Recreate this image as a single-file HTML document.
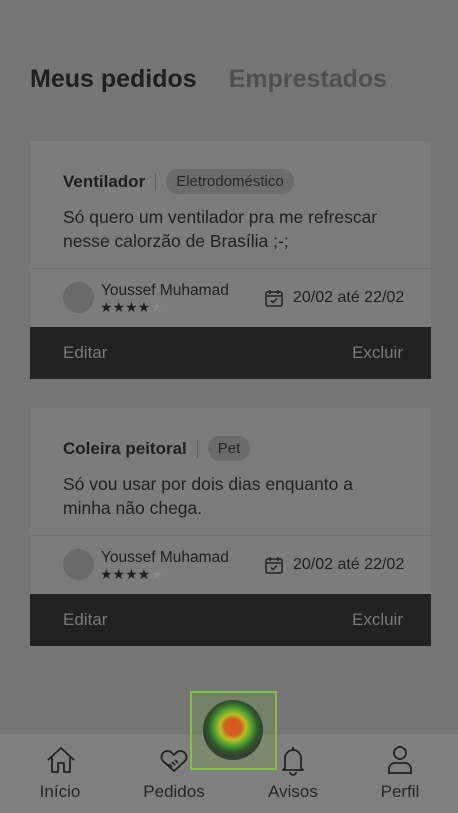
<!DOCTYPE html>
<html><head><meta charset="utf-8"><style>
*{margin:0;padding:0;box-sizing:border-box}
body{width:458px;height:813px;background:#757575;font-family:"Liberation Sans",sans-serif;position:relative;overflow:hidden;color:#1f1f1f}
.tabs{position:absolute;top:65px;left:30px;font-size:25px;font-weight:bold}
.tabs span{margin-right:32px}
.card{position:absolute;left:30px;width:401px;background:#7c7c7c}
.head{position:absolute;left:33px;top:28px;display:flex;align-items:center;font-size:17px;font-weight:bold}
.sep{width:1px;height:18px;background:#5e5e5e;margin:0 10px}
.chip{font-weight:normal;font-size:15px;background:#6b6b6b;padding:4px 10px;border-radius:12px;color:#262626}
.desc{position:absolute;left:33px;top:64px;font-size:17.5px;line-height:24px;width:330px}
.line{position:absolute;left:0;right:0;top:127px;height:1px;background:#717171}
.av{position:absolute;left:33px;top:141px;width:31px;height:31px;border-radius:50%;background:#6a6a6a}
.name{position:absolute;left:71px;top:141px;font-size:15.5px}
.stars{position:absolute;left:70px;top:158px;font-size:14px;letter-spacing:0px}
.date{position:absolute;left:234px;top:147px;font-size:16px;display:flex;align-items:center;gap:9px}
.bar{position:absolute;left:0;right:0;top:186px;height:52px;background:#212121;color:#7a7a7a;font-size:17px}
.bar .e{position:absolute;left:33px;top:16px}.bar .x{position:absolute;right:28px;top:16px}
.nav{position:absolute;left:0;top:734px;width:458px;height:79px;background:#7f7f7f}
.ni{position:absolute;top:48px;font-size:17px;color:#262626;transform:translateX(-50%)}
</style></head><body>
<div class="tabs"><span>Meus pedidos</span><span style="color:#4f4f4f">Emprestados</span></div>

<div class="card" style="top:141px;height:238px">
<div class="head">Ventilador<div class="sep"></div><div class="chip">Eletrodoméstico</div></div>
<div class="desc">Só quero um ventilador pra me refrescar nesse calorzão de Brasília ;-;</div>
<div class="line"></div><div class="av"></div>
<div class="name">Youssef Muhamad</div><div class="stars">★★★★<span style="color:#8a8a8a">★</span></div>
<div class="date"><svg width="20" height="20" viewBox="0 0 20 20" fill="none" stroke="#222" stroke-width="1.5"><rect x="2" y="4" width="16" height="14" rx="1.5"/><path d="M2 8h16M6 2v4M14 2v4M7 12.5l2 2 4-4"/></svg>20/02 até 22/02</div>
<div class="bar"><span class="e">Editar</span><span class="x">Excluir</span></div>
</div>

<div class="card" style="top:408px;height:238px">
<div class="head">Coleira peitoral<div class="sep"></div><div class="chip">Pet</div></div>
<div class="desc">Só vou usar por dois dias enquanto a minha não chega.</div>
<div class="line"></div><div class="av"></div>
<div class="name">Youssef Muhamad</div><div class="stars">★★★★<span style="color:#8a8a8a">★</span></div>
<div class="date"><svg width="20" height="20" viewBox="0 0 20 20" fill="none" stroke="#222" stroke-width="1.5"><rect x="2" y="4" width="16" height="14" rx="1.5"/><path d="M2 8h16M6 2v4M14 2v4M7 12.5l2 2 4-4"/></svg>20/02 até 22/02</div>
<div class="bar"><span class="e">Editar</span><span class="x">Excluir</span></div>
</div>

<div class="nav">
<svg style="position:absolute;left:45px;top:10px" width="32" height="32" viewBox="0 0 32 32" fill="none" stroke="#222" stroke-width="1.8" stroke-linejoin="round"><path d="M3 16L16 4l13 12M7 13v15h6v-9h6v9h6V13"/></svg>
<svg style="position:absolute;left:158px;top:10px" width="32" height="32" viewBox="0 0 32 32" fill="none" stroke="#222" stroke-width="1.8" stroke-linejoin="round"><path d="M16 27L5 17a6 6 0 0 1 9-8l2 2 2-2a6 6 0 0 1 9 8z"/><path d="M11 20l3 3M14 18l3 3M17 16l3 3"/></svg>
<svg style="position:absolute;left:280px;top:10px" width="26" height="32" viewBox="0 0 26 32" fill="none" stroke="#222" stroke-width="1.8" stroke-linejoin="round"><path d="M13 3v3M5 24V14a8 8 0 0 1 16 0v10l2 2H3zM10 28a3 3 0 0 0 6 0"/></svg>
<svg style="position:absolute;left:386px;top:10px" width="28" height="32" viewBox="0 0 28 32" fill="none" stroke="#222" stroke-width="1.8"><circle cx="14" cy="9" r="6"/><path d="M3 29v-4a6 6 0 0 1 6-6h10a6 6 0 0 1 6 6v4z"/></svg>
<span class="ni" style="left:60px">Início</span>
<span class="ni" style="left:174px">Pedidos</span>
<span class="ni" style="left:293px">Avisos</span>
<span class="ni" style="left:400px">Perfil</span>
</div>

<div style="position:absolute;left:190px;top:691px;width:87px;height:79px;border:2px solid #7ec440;background:rgba(110,170,60,0.25)"></div>
<div style="position:absolute;left:203px;top:700px;width:60px;height:60px;border-radius:50%;background:radial-gradient(circle at 50% 45%,#d85a22 0,#d85a22 8px,#b8c020 13px,#4aa030 19px,#2f552c 25px,#333f33 30px)"></div>
</body></html>
